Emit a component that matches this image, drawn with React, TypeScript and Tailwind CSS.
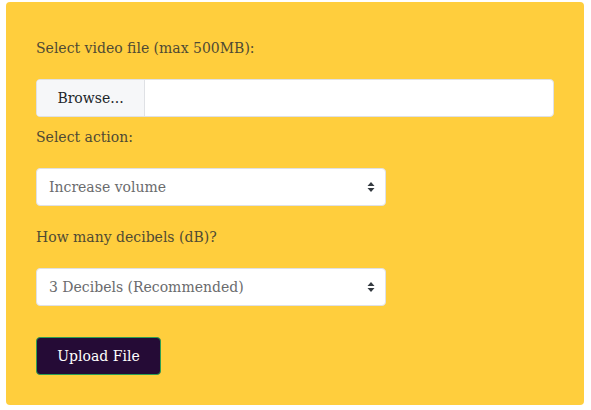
export default function App() {
  return (
    <div className="min-h-screen bg-white pl-[6px] pr-[7px] pt-[2px] font-['DejaVu_Serif',serif]">
      <form className="flex flex-col rounded-[4px] bg-[#ffce3d] px-[30px] pt-[35px] pb-[30px] text-[14px] text-[#4f4a34]">
        <label className="leading-[22px]">Select video file (max 500MB):</label>
        <div className="mt-[20px] flex h-[38px] w-[518px] overflow-hidden rounded-[4px] border border-[#dfe1e5] bg-white">
          <span className="flex w-[108px] items-center justify-center border-r border-[#dfe1e5] bg-[#f6f7f9] text-[#212529]">
            Browse...
          </span>
          <span className="flex-1" />
        </div>
        <label className="mt-[9px] leading-[22px]">Select action:</label>
        <Select className="mt-[20px]" value="Increase volume" />
        <label className="mt-[20px] leading-[22px]">How many decibels (dB)?</label>
        <Select className="mt-[20px]" value="3 Decibels (Recommended)" />
        <div className="mt-[31px]">
          <button
            type="button"
            className="h-[38px] w-[125px] rounded-[4px] border border-[#2e9e52] bg-[#250b36] text-[14px] text-white"
          >
            Upload File
          </button>
        </div>
      </form>
    </div>
  );
}

function Select({ value, className }: { value: string; className?: string }) {
  return (
    <div
      className={
        'flex h-[38px] w-[350px] items-center justify-between rounded-[4px] border border-[#dfe1e5] bg-white pl-[12px] pr-[10px] text-[#6a6b6d] ' +
        (className ?? '')
      }
    >
      <span>{value}</span>
      <svg width="8" height="12" viewBox="0 0 8 12" className="text-[#343a40]">
        <path d="M4 1 L7.5 5 H0.5 Z M4 11 L7.5 7 H0.5 Z" fill="currentColor" />
      </svg>
    </div>
  );
}
